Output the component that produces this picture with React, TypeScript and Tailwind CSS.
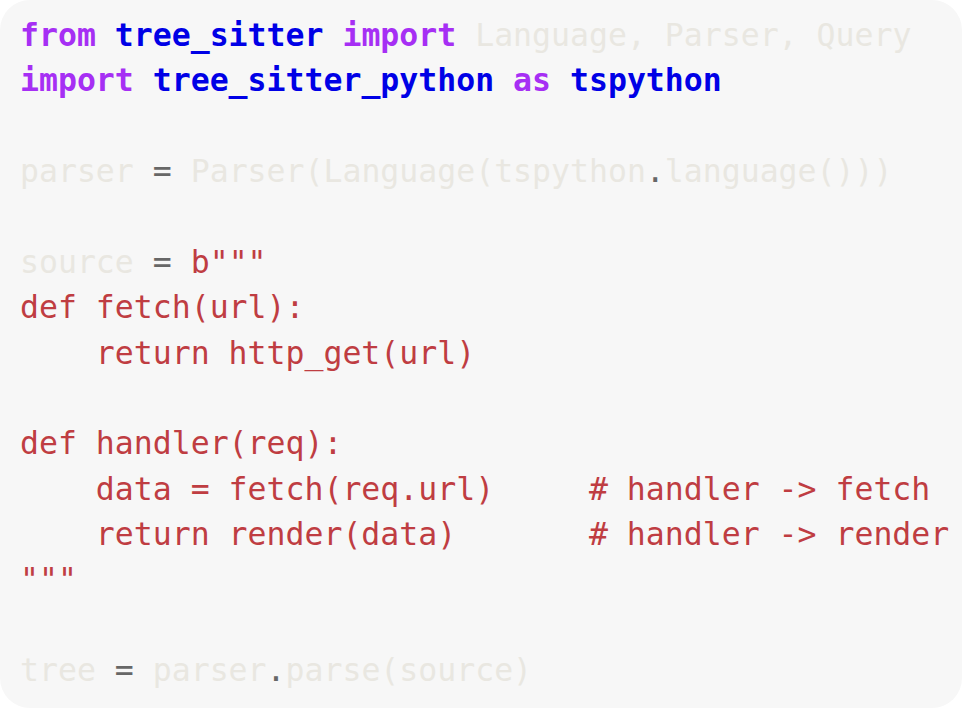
type Tok = [string, string]

const KW = 'text-[#a62ff4] font-bold'
const MOD = 'text-[#0000e6] font-bold'
const DIM = 'text-[#e9e7e1]'
const OP = 'text-[#676767]'
const STR = 'text-[#bf3d42]'

const lines: Tok[][] = [
  [[KW, 'from'], ['', ' '], [MOD, 'tree_sitter'], ['', ' '], [KW, 'import'], ['', ' '], [DIM, 'Language, Parser, Query']],
  [[KW, 'import'], ['', ' '], [MOD, 'tree_sitter_python'], ['', ' '], [KW, 'as'], ['', ' '], [MOD, 'tspython']],
  [],
  [[DIM, 'parser'], ['', ' '], [OP, '='], ['', ' '], [DIM, 'Parser(Language(tspython'], [OP, '.'], [DIM, 'language()))']],
  [],
  [[DIM, 'source'], ['', ' '], [OP, '='], ['', ' '], [STR, 'b"""']],
  [[STR, 'def fetch(url):']],
  [[STR, '    return http_get(url)']],
  [],
  [[STR, 'def handler(req):']],
  [[STR, '    data = fetch(req.url)     # handler -> fetch']],
  [[STR, '    return render(data)       # handler -> render']],
  [[STR, '"""']],
  [],
  [[DIM, 'tree'], ['', ' '], [OP, '='], ['', ' '], [DIM, 'parser'], [OP, '.'], [DIM, 'parse(source)']],
]

export default function App() {
  return (
    <div className="w-[962px] h-[708px] bg-white">
      <div className="w-full h-full rounded-[30px] bg-[#f7f7f7] pt-[13px] pl-[20px]">
        <pre className="font-['DejaVu_Sans_Mono',monospace] text-[31.5px] leading-[45.36px] whitespace-pre">
          {lines.map((line, i) => (
            <div key={i} className="h-[45.36px]">
              {line.map(([cls, text], j) => (
                <span key={j} className={cls}>{text}</span>
              ))}
            </div>
          ))}
        </pre>
      </div>
    </div>
  )
}
